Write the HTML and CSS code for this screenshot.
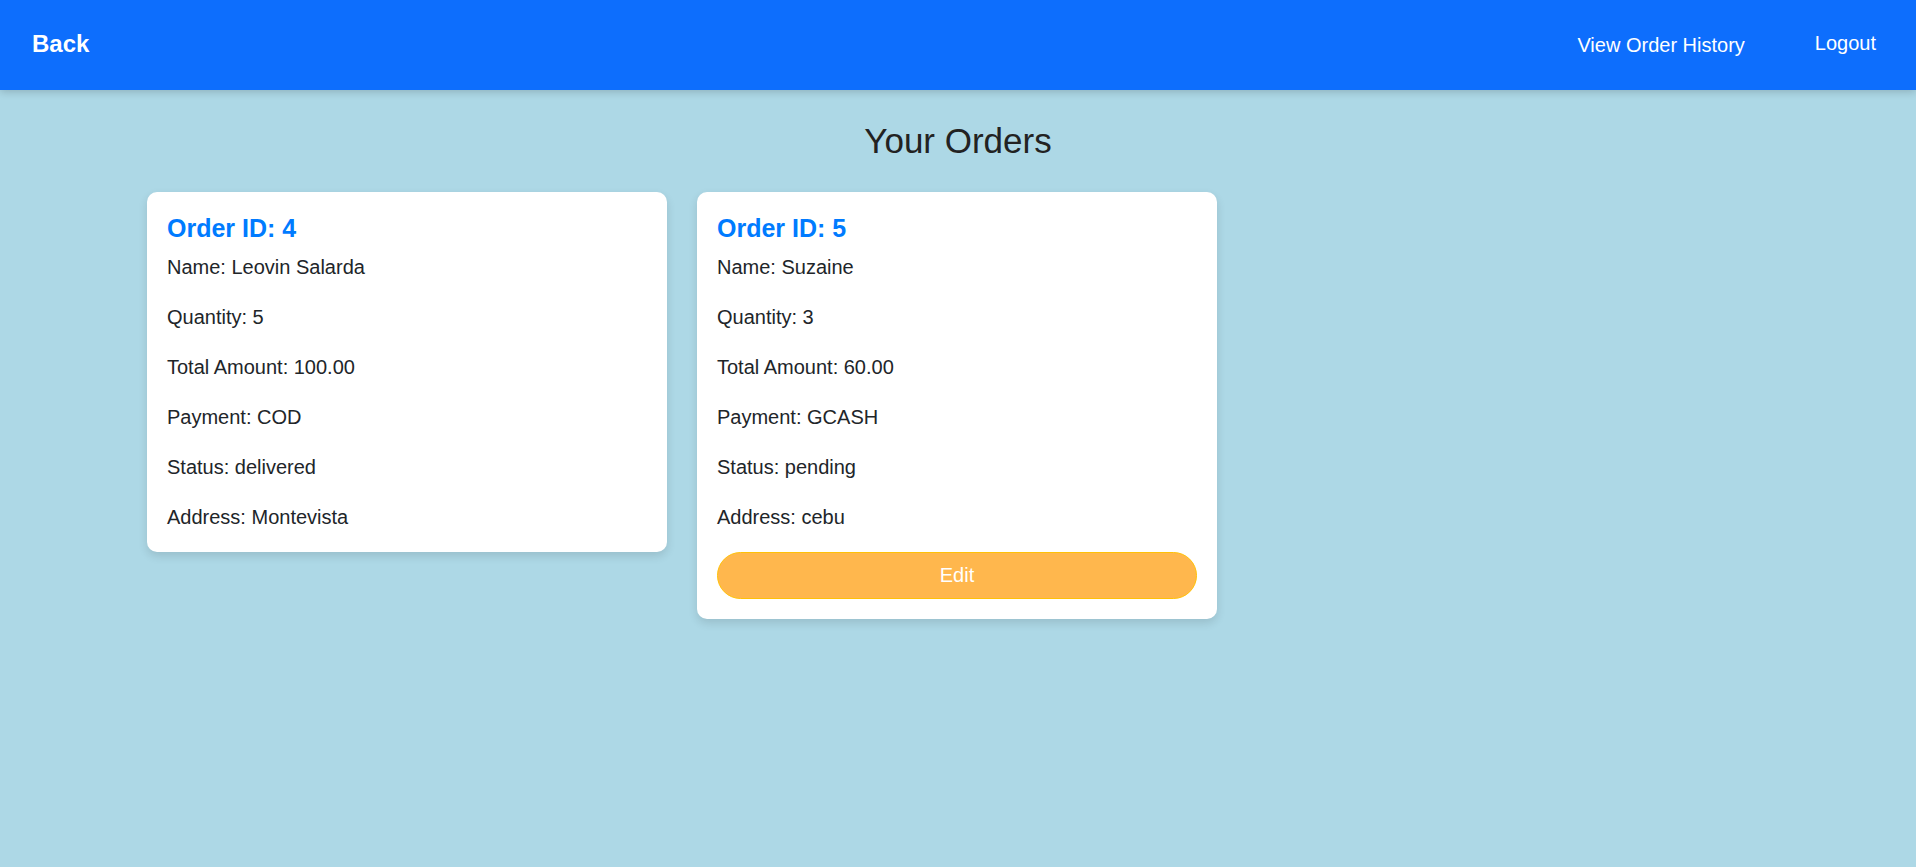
FILE: index.html
```html
<!DOCTYPE html>
<html lang="en">
<head>
<meta charset="utf-8">
<title>Your Orders</title>
<link rel="stylesheet" href="styles.css">
</head>
<body>
<header class="navbar">
  <a class="nav-back" href="#">Back</a>
  <nav class="nav-links">
    <a class="nav-link" href="#">View Order History</a>
    <a class="nav-link nav-logout" href="#">Logout</a>
  </nav>
</header>
<main class="content">
  <h1 class="page-title">Your Orders</h1>
  <section class="orders">
    <article class="order-card">
      <h2 class="order-id">Order ID: 4</h2>
      <p class="order-line">Name: Leovin Salarda</p>
      <p class="order-line">Quantity: 5</p>
      <p class="order-line">Total Amount: 100.00</p>
      <p class="order-line">Payment: COD</p>
      <p class="order-line">Status: delivered</p>
      <p class="order-line">Address: Montevista</p>
    </article>
    <article class="order-card">
      <h2 class="order-id">Order ID: 5</h2>
      <p class="order-line">Name: Suzaine</p>
      <p class="order-line">Quantity: 3</p>
      <p class="order-line">Total Amount: 60.00</p>
      <p class="order-line">Payment: GCASH</p>
      <p class="order-line">Status: pending</p>
      <p class="order-line">Address: cebu</p>
      <button class="edit-btn" type="button">Edit</button>
    </article>
  </section>
</main>
</body>
</html>
```
FILE: styles.css
```css
* { box-sizing: border-box; }

html, body {
  margin: 0;
  padding: 0;
}

body {
  background: #add8e6;
  font-family: "Liberation Sans", Arial, sans-serif;
  color: #212529;
  min-height: 867px;
}

.navbar {
  height: 90px;
  background: #0d6efd;
  display: flex;
  align-items: center;
  justify-content: space-between;
  padding: 0 40px 0 32px;
  box-shadow: 0 2px 8px rgba(0, 0, 0, 0.18);
  position: relative;
}

.nav-back {
  color: #ffffff;
  font-weight: bold;
  font-size: 24px;
  text-decoration: none;
  margin-bottom: 2px;
}

.nav-links {
  display: flex;
  align-items: center;
  gap: 70px;
}

.nav-link {
  color: #ffffff;
  font-size: 20px;
  text-decoration: none;
}

.nav-logout {
  margin-bottom: 4px;
}

.content {
  padding-top: 31px;
}

.page-title {
  margin: 0 0 31px;
  text-align: center;
  font-size: 35px;
  line-height: 40px;
  font-weight: normal;
  color: #222222;
}

.orders {
  display: grid;
  grid-template-columns: repeat(3, 520px);
  gap: 30px;
  justify-content: center;
  align-items: start;
  padding-right: 2px;
}

.order-card {
  background: #ffffff;
  border-radius: 10px;
  padding: 20px;
  box-shadow: 0 4px 10px rgba(0, 0, 0, 0.12);
}

.order-id {
  margin: 0 0 10px;
  font-size: 25px;
  line-height: 32px;
  font-weight: bold;
  color: #007bff;
}

.order-line {
  margin: 0 0 24px;
  font-size: 20px;
  line-height: 26px;
  color: #212529;
}

.order-line:last-of-type {
  margin-bottom: 2px;
}

.edit-btn {
  display: block;
  width: 100%;
  height: 47px;
  margin-top: 22px;
  border: 1px solid #ffc107;
  border-radius: 24px;
  background: #ffb74d;
  color: #ffffff;
  font-family: "Liberation Sans", Arial, sans-serif;
  font-size: 20px;
  cursor: pointer;
}
```
